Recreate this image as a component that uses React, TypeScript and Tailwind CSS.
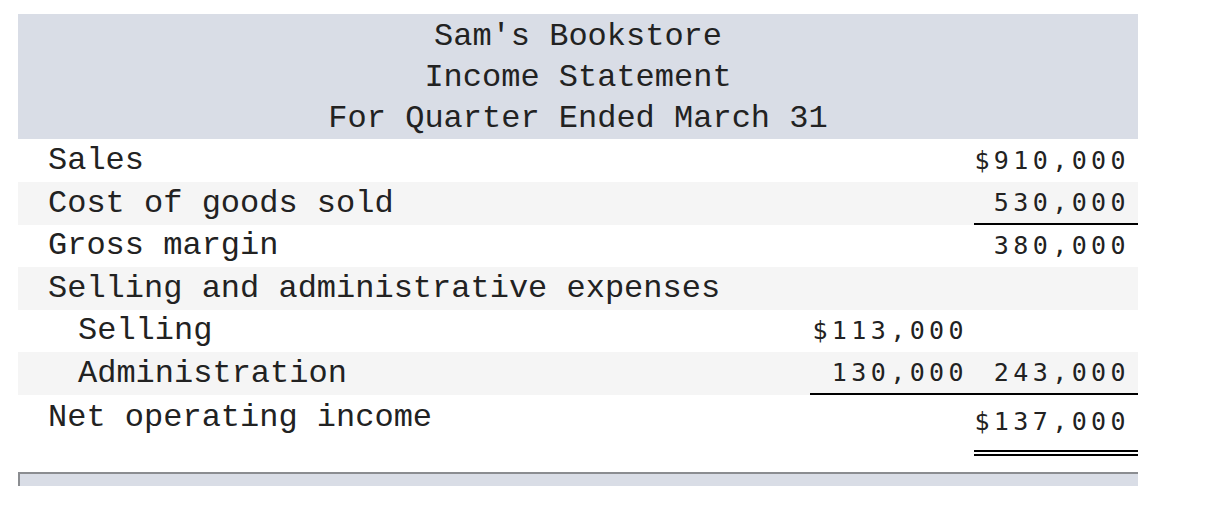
import React from 'react';

type Row = {
  label: string;
  indent?: boolean;
  mid?: string;
  right?: string;
  shaded?: boolean;
  h: string;
  midLine?: boolean;
  rightLine?: boolean;
};

const ROWS: Row[] = [
  { label: 'Sales', right: '$910,000', h: 'h-[43px]' },
  { label: 'Cost of goods sold', right: '530,000', shaded: true, h: 'h-[43px]', rightLine: true },
  { label: 'Gross margin', right: '380,000', h: 'h-[42px]' },
  { label: 'Selling and administrative expenses', shaded: true, h: 'h-[43px]' },
  { label: 'Selling', indent: true, mid: '$113,000', h: 'h-[42px]' },
  { label: 'Administration', indent: true, mid: '130,000', right: '243,000', shaded: true, h: 'h-[43px]', midLine: true, rightLine: true },
];

const label = "font-['Liberation_Mono',monospace] text-[32px] text-[#222]";
const num = "font-['DejaVu_Sans_Mono',monospace] text-[25px] leading-[34px] tracking-[4.4px] text-[#222]";

export default function App() {
  return (
    <div className="w-[1212px] h-[526px] bg-white pt-[14px] pl-[18px]">
      <div className="w-[1120px]">
        <div className={`h-[125px] pt-[2px] bg-[#d9dde6] flex flex-col items-center ${label} leading-[41px]`}>
          <div>Sam's Bookstore</div>
          <div>Income Statement</div>
          <div>For Quarter Ended March 31</div>
        </div>

        {ROWS.map((r) => (
          <div key={r.label} className={`flex ${r.h} ${r.shaded ? 'bg-[#f5f5f5]' : 'bg-white'}`}>
            <div className={`flex-1 flex items-center ${r.indent ? 'pl-[60px]' : 'pl-[30px]'} ${label}`}>
              {r.label}
            </div>
            <div className={`w-[164px] flex items-center justify-end pr-[6px] ${num} ${r.midLine ? 'border-b-2 border-black' : ''}`}>
              {r.mid}
            </div>
            <div className={`w-[164px] flex items-center justify-end pr-[8px] ${num} ${r.rightLine ? 'border-b-2 border-black' : ''}`}>
              {r.right}
            </div>
          </div>
        ))}

        <div className="flex h-[61px] bg-white">
          <div className={`flex-1 pl-[30px] pt-[5px] leading-[36px] ${label}`}>Net operating income</div>
          <div className="w-[164px]" />
          <div className={`w-[164px] flex justify-end pr-[8px] pt-[10px] border-b-[6px] border-double border-black ${num}`}>
            $137,000
          </div>
        </div>

        <div className="mt-[16px] h-[14px] bg-[#d9dde6] border-t-2 border-l-2 border-[#8b8d91]" />
      </div>
    </div>
  );
}
